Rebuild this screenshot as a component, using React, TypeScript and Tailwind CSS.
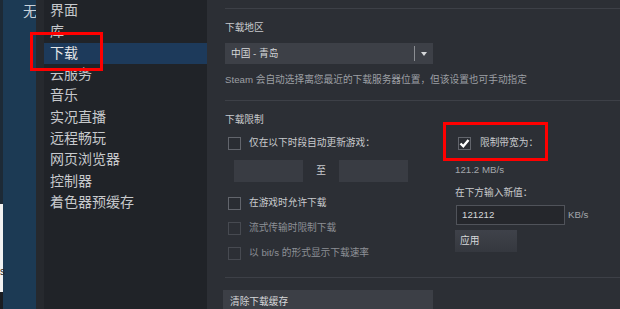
const menu = [
  '界面',
  '库',
  '下载',
  '云服务',
  '音乐',
  '实况直播',
  '远程畅玩',
  '网页浏览器',
  '控制器',
  '着色器预缓存',
]

const Checkbox = ({ checked = false, dim = false }: { checked?: boolean; dim?: boolean }) => (
  <div
    className={`size-[13px] shrink-0 border flex items-center justify-center ${
      dim ? 'border-[#474a51] bg-[#2c2f35]' : 'border-[#62656c] bg-[#2a2d33]'
    }`}
  >
    {checked && (
      <svg width="11" height="11" viewBox="0 0 11 11">
        <path d="M1.5 5.5 L4.3 8.3 L9.5 2" fill="none" stroke="#ffffff" strokeWidth="2.4" />
      </svg>
    )}
  </div>
)

const CheckRow = ({ label, dim = false, className = '' }: { label: string; dim?: boolean; className?: string }) => (
  <div className={`flex items-center h-[16px] pl-[3px] ${className}`}>
    <Checkbox dim={dim} />
    <span className={`ml-[8px] ${dim ? 'text-[#8d9095]' : 'text-[#c9cbce]'}`}>{label}</span>
  </div>
)

export default function App() {
  return (
    <div className="relative flex h-[309px] w-[620px] overflow-hidden bg-[#2c2f35] font-['Liberation_Sans','Noto_Sans_CJK_SC',sans-serif]">
      {/* far left edge */}
      <div className="w-[3px] shrink-0 flex flex-col">
        <div className="h-[204px] bg-[#1d2a36]" />
        <div className="h-[88px] bg-[#f2f2f2]" />
        <div className="flex-1 bg-[#1a1d22]" />
      </div>
      <div className="w-[33px] shrink-0 bg-[#1c3a54] text-[14px] text-[#c9d2da] leading-none pt-[4px] pl-[20px]">无</div>
      <div className="w-[8px] shrink-0 bg-[#26292e]" />

      {/* sidebar */}
      <div className="w-[163px] shrink-0 bg-[#202328] text-[14px] text-[#c7c9cc]">
        {menu.map((m) => (
          <div
            key={m}
            className={`h-[21.3px] flex items-center pl-[6px] ${m === '下载' ? 'bg-[#1d3a5b] text-[#e4e6e8]' : ''}`}
          >
            {m}
          </div>
        ))}
      </div>

      {/* content */}
      <div className="flex-1 pl-[18px] text-[9.7px] leading-[16px] text-[#c9cbce]">
        <div className="h-[8px]" />
        <div className="border-t border-[#3d4047]" />
        <div className="mt-[11px]">下载地区</div>
        <div className="mt-[7px] w-[208px] h-[21px] bg-[#3d4047] flex items-center pl-[6px] text-[#d6d8da]">
          <span className="flex-1">中国 - 青岛</span>
          <div className="w-px h-[15px] bg-[#8b8e93]" />
          <div className="w-[18px] flex justify-center">
            <div className="border-l-[3.5px] border-r-[3.5px] border-t-[4px] border-l-transparent border-r-transparent border-t-[#d6d8da]" />
          </div>
        </div>
        <div className="mt-[9px] leading-[14px] text-[#9c9fa4] whitespace-nowrap">
          Steam 会自动选择离您最近的下载服务器位置，但该设置也可手动指定
        </div>
        <div className="mt-[13px] border-t border-[#3d4047]" />

        <div className="flex">
          <div className="w-[218px] shrink-0">
            <div className="mt-[11px]">下载限制</div>
            <CheckRow label="仅在以下时段自动更新游戏：" className="mt-[7px]" />
            <div className="mt-[9px] flex items-center pl-[9px]">
              <div className="w-[69px] h-[22px] bg-[#393c43]" />
              <div className="w-[36px] text-center">至</div>
              <div className="w-[69px] h-[22px] bg-[#393c43]" />
            </div>
            <CheckRow label="在游戏时允许下载" className="mt-[13px]" />
            <CheckRow label="流式传输时限制下载" dim className="mt-[9px]" />
            <CheckRow label="以 bit/s 的形式显示下载速率" dim className="mt-[9px]" />
          </div>

          <div className="relative pl-[12px] whitespace-nowrap">
            <div className="mt-[34px] flex items-center h-[16px] pl-[3px]">
              <Checkbox checked />
              <span className="ml-[9px]">限制带宽为：</span>
            </div>
            <div className="mt-[11px] text-[#a3a6ab]">121.2 MB/s</div>
            <div className="mt-[7px]">在下方输入新值：</div>
            <div className="mt-[4px] flex items-center pl-[1px]">
              <div className="w-[109px] h-[20px] border border-[#50535a] bg-[#25272c] flex items-center pl-[5px] text-[#d6d8da]">
                121212
              </div>
              <span className="ml-[3px] text-[#a3a6ab]">KB/s</span>
            </div>
            <div className="mt-[5px] w-[62px] h-[22px] bg-gradient-to-b from-[#3f424a] to-[#35383f] flex items-center pl-[5px] text-[#d6d8da]">
              应用
            </div>
            {/* annotation */}
            <div className="absolute left-0 top-[21px] w-[105px] h-[39px] border-[3px] border-[#ff0000]" />
          </div>
        </div>

        <div className="mt-[16px] border-t border-[#3d4047]" />
        <div className="mt-[12px] ml-[-2px] w-[210px] h-[25px] bg-[#3c3f46] pl-[7px] pt-[4px] text-[#d6d8da]">
          清除下载缓存
        </div>
      </div>

      {/* annotation over sidebar */}
      <div className="absolute left-[30px] top-[32px] w-[73px] h-[39px] border-[3px] border-[#ff0000]" />
      <span className="absolute left-[0px] top-[266px] text-[10px] leading-[12px] text-[#222] font-['Liberation_Sans',sans-serif]">s</span>
    </div>
  )
}
